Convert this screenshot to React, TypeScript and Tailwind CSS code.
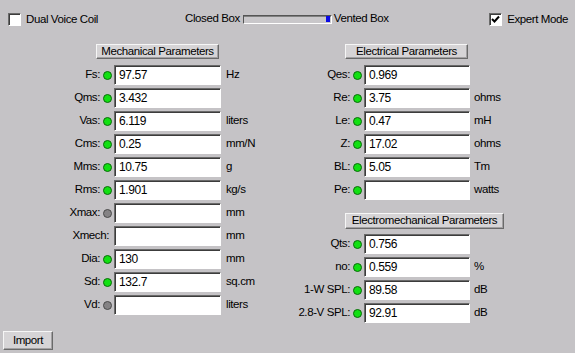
import React from 'react';

const fontStack = { fontFamily: '"Liberation Sans", Arial, sans-serif' };

const textClass = 'whitespace-nowrap text-[11.5px] leading-none tracking-[-0.4px] text-black';

const fieldClass =
  'flex h-[20px] items-center border border-t-[#6a6a6a] border-l-[#6a6a6a] border-b-white border-r-white bg-white pl-[4px] text-[12px] tracking-[-0.4px] text-black shadow-[inset_1px_1px_0_#3c3c3c]';

const raisedClass =
  'flex items-center justify-center whitespace-nowrap border border-t-[#f6f6f6] border-l-[#f6f6f6] border-b-[#6a6a6a] border-r-[#6a6a6a] bg-[#d6d4d6] text-[11.5px] leading-none tracking-[-0.4px] text-black shadow-[inset_-1px_-1px_0_#a3a1a3]';

type Status = 'green' | 'gray' | 'none';

type Param = { label: string; value: string; unit: string; status: Status };

type RowProps = Param & {
  labelWidth: string;
  fieldWidth: string;
  unitGap: string;
};

function Dot({ status }: { status: Status }) {
  if (status === 'none') {
    return null;
  }
  return (
    <span
      className={
        status === 'green'
          ? 'ml-[3px] inline-block h-[9px] w-[9px] shrink-0 rounded-full border border-[#0a6a0a] bg-[#12e012]'
          : 'ml-[3px] inline-block h-[9px] w-[9px] shrink-0 rounded-full border border-[#4a4a4a] bg-[#858385]'
      }
    />
  );
}

function ParamRow({ label, value, unit, status, labelWidth, fieldWidth, unitGap }: RowProps) {
  return (
    <div className="flex h-[20px] items-center">
      <div
        className={`flex shrink-0 items-center justify-end ${labelWidth} ${status === 'none' ? 'pr-[5px]' : 'pr-[2px]'}`}
      >
        <span className={textClass}>{label}</span>
        <Dot status={status} />
      </div>
      <div className={`${fieldClass} ${fieldWidth} shrink-0`}>{value}</div>
      {unit && <span className={`${unitGap} ${textClass}`}>{unit}</span>}
    </div>
  );
}

const mechanical: Param[] = [
  { label: 'Fs:', value: '97.57', unit: 'Hz', status: 'green' },
  { label: 'Qms:', value: '3.432', unit: '', status: 'green' },
  { label: 'Vas:', value: '6.119', unit: 'liters', status: 'green' },
  { label: 'Cms:', value: '0.25', unit: 'mm/N', status: 'green' },
  { label: 'Mms:', value: '10.75', unit: 'g', status: 'green' },
  { label: 'Rms:', value: '1.901', unit: 'kg/s', status: 'green' },
  { label: 'Xmax:', value: '', unit: 'mm', status: 'gray' },
  { label: 'Xmech:', value: '', unit: 'mm', status: 'none' },
  { label: 'Dia:', value: '130', unit: 'mm', status: 'green' },
  { label: 'Sd:', value: '132.7', unit: 'sq.cm', status: 'green' },
  { label: 'Vd:', value: '', unit: 'liters', status: 'gray' }
];

const electrical: Param[] = [
  { label: 'Qes:', value: '0.969', unit: '', status: 'green' },
  { label: 'Re:', value: '3.75', unit: 'ohms', status: 'green' },
  { label: 'Le:', value: '0.47', unit: 'mH', status: 'green' },
  { label: 'Z:', value: '17.02', unit: 'ohms', status: 'green' },
  { label: 'BL:', value: '5.05', unit: 'Tm', status: 'green' },
  { label: 'Pe:', value: '', unit: 'watts', status: 'green' }
];

const electromech: Param[] = [
  { label: 'Qts:', value: '0.756', unit: '', status: 'green' },
  { label: 'no:', value: '0.559', unit: '%', status: 'green' },
  { label: '1-W SPL:', value: '89.58', unit: 'dB', status: 'green' },
  { label: '2.8-V SPL:', value: '92.91', unit: 'dB', status: 'green' }
];

function CheckBox({ checked }: { checked: boolean }) {
  return (
    <span className="flex h-[13px] w-[13px] shrink-0 items-center justify-center border border-t-[#6a6a6a] border-l-[#6a6a6a] border-b-white border-r-white bg-white shadow-[inset_1px_1px_0_#3c3c3c]">
      {checked && (
        <svg width="9" height="9" viewBox="0 0 9 9">
          <path d="M1 4 L3.5 6.5 L8 1.5" stroke="#000" strokeWidth="2" fill="none" />
        </svg>
      )}
    </span>
  );
}

export default function App() {
  return (
    <div className="flex h-[353px] w-[575px] flex-col bg-[#c5c3c6] text-black" style={fontStack}>
      <div className="flex h-[38px] items-start pt-[13px]">
        <div className="ml-[8px] flex w-[177px] items-center">
          <CheckBox checked={false} />
          <span className={`ml-[5px] ${textClass}`}>Dual Voice Coil</span>
        </div>
        <div className="flex items-center">
          <span className={textClass}>Closed Box</span>
          <div className="ml-[3px] mt-[1px] flex h-[9px] w-[89px] items-center justify-end border border-t-[#555] border-l-[#555] border-b-white border-r-white bg-[#c9c7ca] pr-[1px] shadow-[inset_0_1px_0_#808080]">
            <span className="h-[6px] w-[4px] bg-[#0a0ae6]" />
          </div>
          <span className={`ml-[2px] ${textClass}`}>Vented Box</span>
        </div>
        <div className="ml-auto mr-[7px] flex items-center">
          <CheckBox checked />
          <span className={`ml-[5px] ${textClass}`}>Expert Mode</span>
        </div>
      </div>

      <div className="flex">
        <div className="flex w-[300px] flex-col">
          <div className={`${raisedClass} ml-[96px] mt-[6px] h-[15px] w-[123px]`}>Mechanical Parameters</div>
          <div className="mt-[6px] flex flex-col gap-[3px]">
            {mechanical.map((row) => (
              <ParamRow key={row.label} {...row} labelWidth="w-[114px]" fieldWidth="w-[107px]" unitGap="ml-[5px]" />
            ))}
          </div>
        </div>

        <div className="flex flex-1 flex-col">
          <div className={`${raisedClass} ml-[45px] mt-[6px] h-[15px] w-[123px]`}>Electrical Parameters</div>
          <div className="mt-[6px] flex flex-col gap-[3px]">
            {electrical.map((row) => (
              <ParamRow key={row.label} {...row} labelWidth="w-[64px]" fieldWidth="w-[106px]" unitGap="ml-[4px]" />
            ))}
          </div>
          <div className={`${raisedClass} ml-[45px] mt-[13px] h-[16px] w-[159px]`}>Electromechanical Parameters</div>
          <div className="mt-[5px] flex flex-col gap-[3px]">
            {electromech.map((row) => (
              <ParamRow key={row.label} {...row} labelWidth="w-[64px]" fieldWidth="w-[106px]" unitGap="ml-[4px]" />
            ))}
          </div>
        </div>
      </div>

      <div className="mt-auto pb-[3px] pl-[3px]">
        <div className={`${raisedClass} h-[19px] w-[50px]`}>Import</div>
      </div>
    </div>
  );
}
